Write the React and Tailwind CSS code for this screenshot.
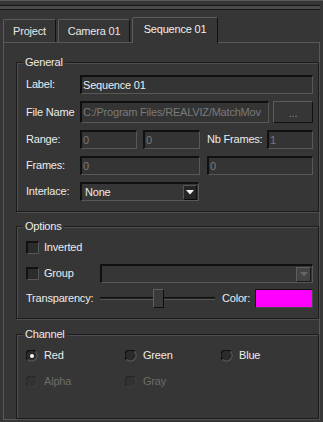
const Field = ({ value, disabled, className = "" }) => (
  <div
    className={`h-[19px] min-w-0 flex items-center pl-[1px] overflow-hidden whitespace-nowrap border-t-2 border-l-2 border-b border-r border-t-[#101010] border-l-[#101010] border-b-[#585858] border-r-[#585858] bg-[#343434] ${
      disabled ? "text-[#7a7a7a]" : "text-[#ececec]"
    } ${className}`}
  >
    {value}
  </div>
);

const Arrow = ({ color }) => (
  <svg width="8" height="5" viewBox="0 0 8 5">
    <path d="M0 0h8L4 4.5z" fill={color} />
  </svg>
);

const Check = () => (
  <div className="w-[13px] h-[13px] border-t-2 border-l-2 border-b border-r border-t-[#121212] border-l-[#121212] border-b-[#575757] border-r-[#575757] bg-[#2c2c2c]" />
);

const Radio = ({ checked, disabled }) => (
  <svg width="12" height="12" viewBox="0 0 12 12">
    <circle cx="6" cy="6" r="5" fill={disabled ? "#323232" : "#2a2a2a"} />
    <path d="M1.5 9.5A5 5 0 0 1 9.5 1.5" stroke={disabled ? "#262626" : "#0e0e0e"} strokeWidth="1.6" fill="none" />
    <path d="M9.5 1.5A5 5 0 0 1 1.5 9.5" stroke={disabled ? "#3e3e3e" : "#555"} strokeWidth="1.2" fill="none" />
    {checked && <circle cx="6" cy="6" r="2" fill="#f4f4f4" />}
  </svg>
);

const Group = ({ title, className = "", children }) => (
  <div className={`relative ml-[12px] w-[303px] border border-[#1c1c1c] shadow-[inset_1px_1px_0_#4e4e4e,1px_1px_0_#4e4e4e] pl-[9px] pr-[5px] ${className}`}>
    <span className="absolute -top-[7px] left-[6px] px-[2px] leading-[13px] bg-[#363636] text-[#ececec]">
      {title}
    </span>
    {children}
  </div>
);

const Tab = ({ children, className = "" }) => (
  <div className={`h-[23px] flex items-center justify-center rounded-t-[2px] border-t border-l border-[#5c5c5c] border-r border-r-[#111] text-[#e8e8e8] ${className}`}>
    {children}
  </div>
);

export default function App() {
  return (
    <div className="w-[323px] h-[422px] bg-[#363636] flex flex-col border-t border-t-[#5a5a5a] pb-[2px] font-['Liberation_Sans',Arial,sans-serif] text-[11px] tracking-[-0.2px] leading-[13px] select-none">
      <div className="h-[16px] shrink-0 pt-[4px] mr-[3px]">
        <div className="h-[5px] border-y border-[#161616] bg-[#4a4a4a]" />
      </div>

      <div className="flex items-end h-[25px] shrink-0 pl-[3px] gap-[2px] mr-[3px]">
        <Tab className="w-[53px]">Project</Tab>
        <Tab className="w-[72px]">Camera 01</Tab>
        <div className="relative z-10 w-[86px] h-[26px] -mb-[1px] pb-[2px] flex items-center justify-center bg-[#363636] rounded-t-[2px] border-t border-l border-[#5c5c5c] border-r border-r-[#111] text-[#f0f0f0]">
          Sequence 01
        </div>
      </div>

      <div className="flex-1 flex flex-col ml-[3px] mr-[3px] border border-[#585858] pt-[19px]">
        <Group title="General" className="pt-[12px] pb-[10px]">
          <div className="flex flex-col gap-[7px]">
            <div className="flex items-center">
              <span className="w-[54px] text-[#ececec]">Label:</span>
              <Field value="Sequence 01" className="flex-1" />
            </div>
            <div className="flex items-center h-[22px]">
              <span className="w-[54px] text-[#ececec]">File Name</span>
              <Field value="C:/Program Files/REALVIZ/MatchMov" disabled className="flex-1 h-[22px]" />
              <div className="ml-[4px] w-[40px] shrink-0 h-[22px] flex items-end justify-center pb-[2px] border-t border-l border-t-[#5c5c5c] border-l-[#5c5c5c] border-b border-r border-b-[#111] border-r-[#111] text-[#8a8a8a]">
                ...
              </div>
            </div>
            <div className="flex items-center">
              <span className="w-[54px] text-[#ececec]">Range:</span>
              <Field value="0" disabled className="w-[57px]" />
              <Field value="0" disabled className="w-[57px] ml-[6px]" />
              <span className="ml-[7px] w-[60px] text-[#ececec]">Nb Frames:</span>
              <Field value="1" disabled className="flex-1" />
            </div>
            <div className="flex items-center">
              <span className="w-[54px] text-[#ececec]">Frames:</span>
              <Field value="0" disabled className="w-[120px]" />
              <Field value="0" disabled className="flex-1 ml-[7px]" />
            </div>
            <div className="flex items-center">
              <span className="w-[54px] text-[#ececec]">Interlace:</span>
              <div className="w-[119px] h-[19px] flex items-center justify-between pl-[3px] pr-[1px] border-t-2 border-l-2 border-b border-r border-t-[#101010] border-l-[#101010] border-b-[#585858] border-r-[#585858] text-[#ececec]">
                None
                <div className="w-[14px] h-[15px] flex items-center justify-center bg-[#262626] border-t border-l border-[#555] border-r border-b border-r-[#0c0c0c] border-b-[#0c0c0c]">
                  <Arrow color="#f2f2f2" />
                </div>
              </div>
            </div>
          </div>
        </Group>

        <Group title="Options" className="mt-[14px] pt-[14px] pb-[10px]">
          <div className="flex items-center h-[13px] gap-[5px] text-[#ececec]">
            <Check />
            Inverted
          </div>
          <div className="flex items-center h-[19px] mt-[10px]">
            <div className="w-[74px] flex items-center gap-[5px] text-[#ececec]">
              <Check />
              Group
            </div>
            <div className="flex-1 h-[19px] flex items-center justify-end pr-[1px] border-t-2 border-l-2 border-b border-r border-t-[#101010] border-l-[#101010] border-b-[#585858] border-r-[#585858]">
              <div className="w-[15px] h-[15px] flex items-center justify-center bg-[#444] border-t border-l border-[#5e5e5e] border-r border-b border-r-[#1a1a1a] border-b-[#1a1a1a]">
                <Arrow color="#666" />
              </div>
            </div>
          </div>
          <div className="flex items-center h-[19px] mt-[6px]">
            <span className="w-[74px] text-[#ececec]">Transparency:</span>
            <div className="relative w-[115px] h-[19px] flex items-center">
              <div className="w-full h-[3px] border-t border-t-[#0e0e0e] border-b border-b-[#565656] bg-[#222]" />
              <div className="absolute left-[53px] top-0 w-[11px] h-[19px] bg-[#3a3a3a] border-t border-l border-[#5e5e5e] border-r border-b border-r-[#0e0e0e] border-b-[#0e0e0e]" />
            </div>
            <span className="ml-[7px] w-[33px] text-[#ececec]">Color:</span>
            <div className="flex-1 h-[19px] bg-[#ff00ff] border-t border-l border-[#111] border-r border-b border-r-[#4a4a4a] border-b-[#4a4a4a]" />
          </div>
        </Group>

        <Group title="Channel" className="mt-[15px] pt-[14px] flex-1">
          <div className="grid grid-cols-[99px_96px_1fr] gap-y-[13px]">
            <div className="flex items-center h-[13px] gap-[6px] text-[#ececec]">
              <Radio checked />
              Red
            </div>
            <div className="flex items-center h-[13px] gap-[6px] text-[#ececec]">
              <Radio />
              Green
            </div>
            <div className="flex items-center h-[13px] gap-[6px] text-[#ececec]">
              <Radio />
              Blue
            </div>
            <div className="flex items-center h-[13px] gap-[6px] text-[#6c6c6c]">
              <Radio disabled />
              Alpha
            </div>
            <div className="flex items-center h-[13px] gap-[6px] text-[#6c6c6c]">
              <Radio disabled />
              Gray
            </div>
          </div>
        </Group>
      </div>
    </div>
  );
}
